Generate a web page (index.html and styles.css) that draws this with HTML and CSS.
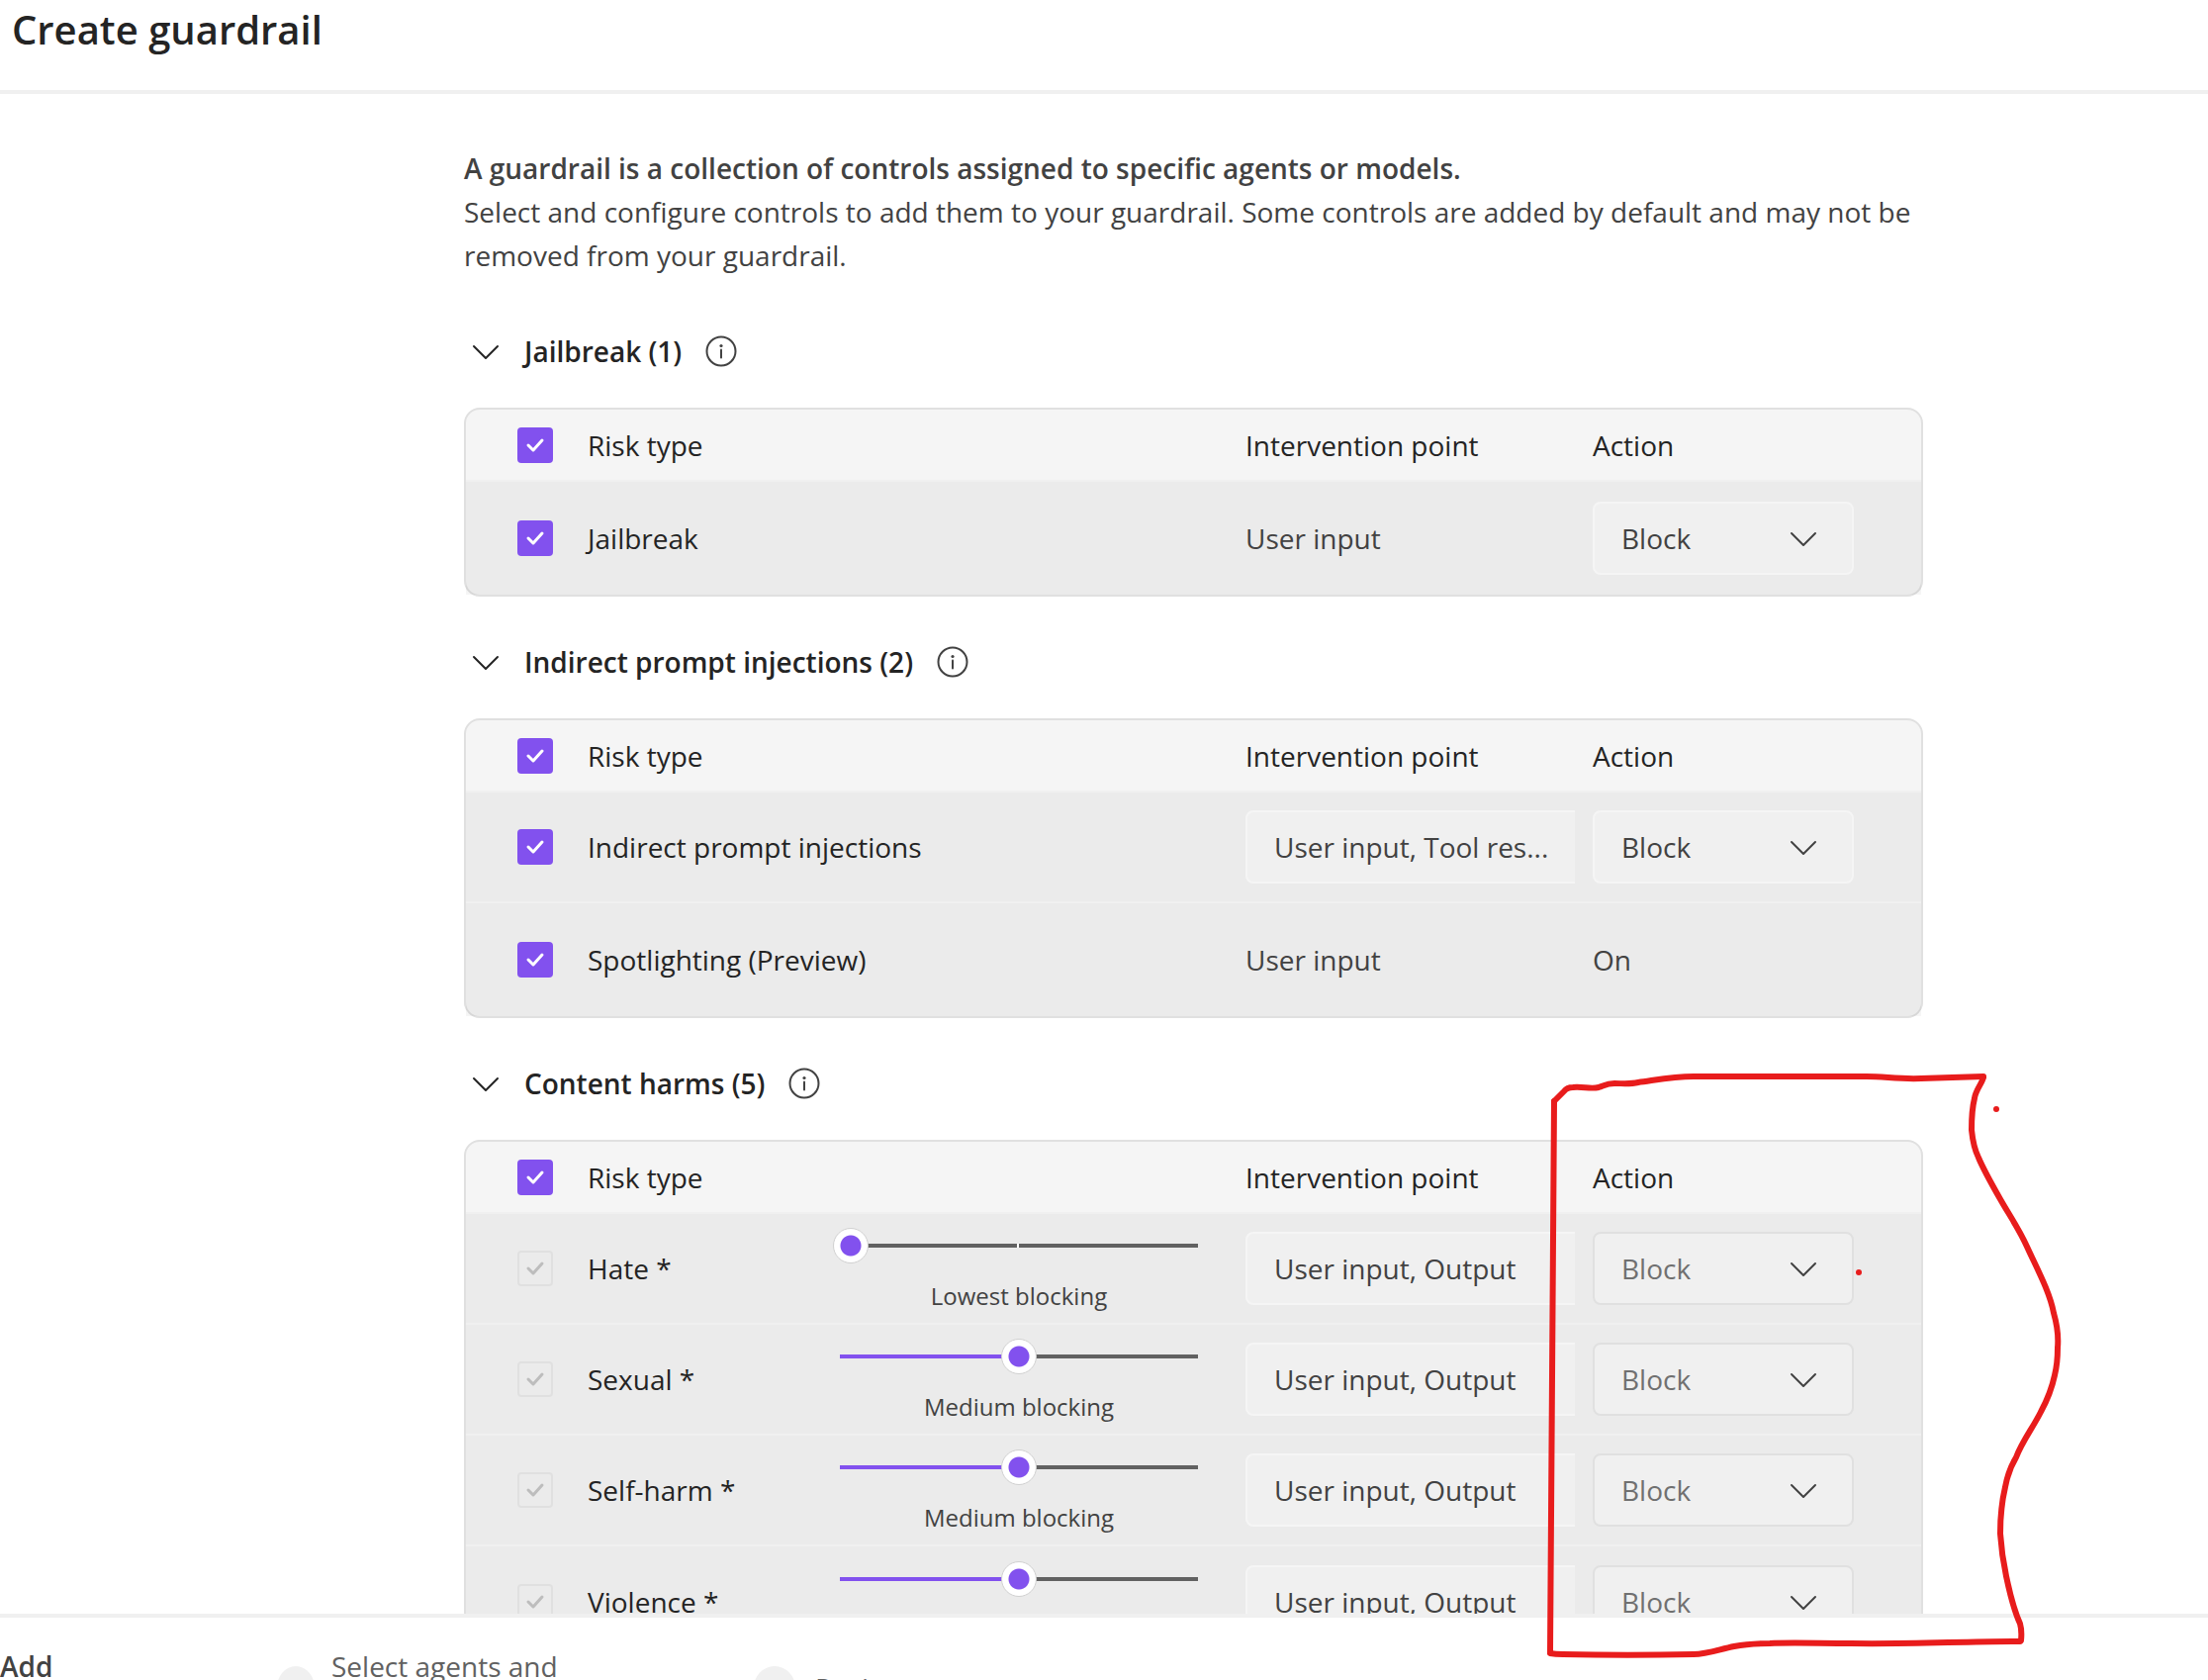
FILE: index.html
```html
<!DOCTYPE html>
<html lang="en">
<head>
<meta charset="utf-8">
<title>Create guardrail</title>
<link rel="stylesheet" href="styles.css">
</head>
<body>
<svg class="defs" aria-hidden="true">
  <symbol id="chevron" viewBox="0 0 28 16"><path d="M2 2l12 12L26 2" fill="none" stroke="currentColor" stroke-width="2" stroke-linecap="round" stroke-linejoin="round"/></symbol>
  <symbol id="check" viewBox="0 0 36 36"><path d="M11 18l5 5 9-10" fill="none" stroke="currentColor" stroke-width="3" stroke-linecap="round" stroke-linejoin="round"/></symbol>
  <symbol id="info" viewBox="0 0 32 32"><circle cx="16" cy="16" r="14.5" fill="none" stroke="currentColor" stroke-width="2"/><circle cx="16" cy="10.5" r="1.6" fill="currentColor"/><path d="M16 14.5v8" stroke="currentColor" stroke-width="2" stroke-linecap="round"/></symbol>
</svg>

<header class="topbar"><h1 class="title">Create guardrail</h1></header>

<main class="content">
  <p class="intro"><strong>A guardrail is a collection of controls assigned to specific agents or models.</strong><br>Select and configure controls to add them to your guardrail. Some controls are added by default and may not be removed from your guardrail.</p>

  <section class="group">
    <div class="group-head">
      <button class="toggle" type="button" aria-expanded="true"><svg class="chevron"><use href="#chevron"/></svg>Jailbreak (1)</button>
      <button class="info" type="button" aria-label="About jailbreak"><svg class="info-icon"><use href="#info"/></svg></button>
    </div>
    <table class="controls">
      <colgroup><col class="col-check"><col><col class="col-level"><col class="col-point"><col class="col-action"></colgroup>
      <thead><tr>
        <th><span class="tick"><input type="checkbox" id="all1" checked><svg><use href="#check"/></svg></span></th>
        <th colspan="2"><label for="all1">Risk type</label></th><th>Intervention point</th><th>Action</th>
      </tr></thead>
      <tbody>
        <tr class="tall">
          <td><span class="tick"><input type="checkbox" id="jb" checked><svg><use href="#check"/></svg></span></td>
          <td colspan="2" class="name"><label for="jb">Jailbreak</label></td>
          <td>User input</td>
          <td><span class="drop"><select aria-label="Jailbreak action"><option>Block</option></select><svg class="chevron"><use href="#chevron"/></svg></span></td>
        </tr>
      </tbody>
    </table>
  </section>

  <section class="group">
    <div class="group-head">
      <button class="toggle" type="button" aria-expanded="true"><svg class="chevron"><use href="#chevron"/></svg>Indirect prompt injections (2)</button>
      <button class="info" type="button" aria-label="About indirect prompt injections"><svg class="info-icon"><use href="#info"/></svg></button>
    </div>
    <table class="controls">
      <colgroup><col class="col-check"><col><col class="col-level"><col class="col-point"><col class="col-action"></colgroup>
      <thead><tr>
        <th><span class="tick"><input type="checkbox" id="all2" checked><svg><use href="#check"/></svg></span></th>
        <th colspan="2"><label for="all2">Risk type</label></th><th>Intervention point</th><th>Action</th>
      </tr></thead>
      <tbody>
        <tr>
          <td><span class="tick"><input type="checkbox" id="ipi" checked><svg><use href="#check"/></svg></span></td>
          <td colspan="2" class="name"><label for="ipi">Indirect prompt injections</label></td>
          <td><div class="clip"><span class="drop wide"><select aria-label="Indirect prompt injections intervention point"><option>User input, Tool res...</option></select><svg class="chevron"><use href="#chevron"/></svg></span></div></td>
          <td><span class="drop"><select aria-label="Indirect prompt injections action"><option>Block</option></select><svg class="chevron"><use href="#chevron"/></svg></span></td>
        </tr>
        <tr class="tall">
          <td><span class="tick"><input type="checkbox" id="spot" checked><svg><use href="#check"/></svg></span></td>
          <td colspan="2" class="name"><label for="spot">Spotlighting (Preview)</label></td>
          <td>User input</td>
          <td>On</td>
        </tr>
      </tbody>
    </table>
  </section>

  <section class="group">
    <div class="group-head">
      <button class="toggle" type="button" aria-expanded="true"><svg class="chevron"><use href="#chevron"/></svg>Content harms (5)</button>
      <button class="info" type="button" aria-label="About content harms"><svg class="info-icon"><use href="#info"/></svg></button>
    </div>
    <table class="controls">
      <colgroup><col class="col-check"><col><col class="col-level"><col class="col-point"><col class="col-action"></colgroup>
      <thead><tr>
        <th><span class="tick"><input type="checkbox" id="all3" checked><svg><use href="#check"/></svg></span></th>
        <th colspan="2"><label for="all3">Risk type</label></th><th>Intervention point</th><th>Action</th>
      </tr></thead>
      <tbody>
        <tr>
          <td><span class="tick"><input type="checkbox" id="hate" checked disabled><svg><use href="#check"/></svg></span></td>
          <td class="name"><label for="hate">Hate *</label></td>
          <td><div class="level"><input class="low" type="range" id="hate-level" min="0" max="2" value="0"><label for="hate-level">Lowest blocking</label></div></td>
          <td><div class="clip"><span class="drop wide"><select aria-label="Hate intervention point"><option>User input, Output</option></select><svg class="chevron"><use href="#chevron"/></svg></span></div></td>
          <td><span class="drop"><select aria-label="Hate action" disabled><option>Block</option></select><svg class="chevron"><use href="#chevron"/></svg></span></td>
        </tr>
        <tr>
          <td><span class="tick"><input type="checkbox" id="sexual" checked disabled><svg><use href="#check"/></svg></span></td>
          <td class="name"><label for="sexual">Sexual *</label></td>
          <td><div class="level"><input type="range" id="sexual-level" min="0" max="2" value="1"><label for="sexual-level">Medium blocking</label></div></td>
          <td><div class="clip"><span class="drop wide"><select aria-label="Sexual intervention point"><option>User input, Output</option></select><svg class="chevron"><use href="#chevron"/></svg></span></div></td>
          <td><span class="drop"><select aria-label="Sexual action" disabled><option>Block</option></select><svg class="chevron"><use href="#chevron"/></svg></span></td>
        </tr>
        <tr>
          <td><span class="tick"><input type="checkbox" id="self" checked disabled><svg><use href="#check"/></svg></span></td>
          <td class="name"><label for="self">Self-harm *</label></td>
          <td><div class="level"><input type="range" id="self-level" min="0" max="2" value="1"><label for="self-level">Medium blocking</label></div></td>
          <td><div class="clip"><span class="drop wide"><select aria-label="Self-harm intervention point"><option>User input, Output</option></select><svg class="chevron"><use href="#chevron"/></svg></span></div></td>
          <td><span class="drop"><select aria-label="Self-harm action" disabled><option>Block</option></select><svg class="chevron"><use href="#chevron"/></svg></span></td>
        </tr>
        <tr>
          <td><span class="tick"><input type="checkbox" id="violence" checked disabled><svg><use href="#check"/></svg></span></td>
          <td class="name"><label for="violence">Violence *</label></td>
          <td><div class="level"><input type="range" id="violence-level" min="0" max="2" value="1" aria-label="Violence blocking level"></div></td>
          <td><div class="clip"><span class="drop wide"><select aria-label="Violence intervention point"><option>User input, Output</option></select><svg class="chevron"><use href="#chevron"/></svg></span></div></td>
          <td><span class="drop"><select aria-label="Violence action" disabled><option>Block</option></select><svg class="chevron"><use href="#chevron"/></svg></span></td>
        </tr>
      </tbody>
    </table>
  </section>
</main>

<footer class="steps">
  <div class="step current"><span class="step-text">Add</span></div>
  <div class="step second"><span class="dot narrow"></span><span class="step-text">Select agents and</span></div>
  <div class="step"><span class="dot"></span><span class="step-text middle">Review</span></div>
</footer>

<svg class="markup" viewBox="1560 1080 530 600" aria-hidden="true">
  <g fill="none" stroke="#e81c1c" stroke-linecap="round" stroke-linejoin="round">
    <path stroke-width="6" d="M1571 1113L1581 1103Q1584 1099 1590 1099C1600 1098 1608 1101 1616 1099C1622 1097 1624 1095 1632 1095C1640 1095 1648 1096 1656 1094C1672 1092 1690 1088 1712 1088H1887C1905 1088 1920 1091 1942 1090L2005 1088"/>
    <path stroke-width="6" d="M2005 1089C2003 1096 1997 1102 1996 1110C1993 1122 1993 1132 1993 1142C1994 1152 1995 1160 2000 1170C2005 1182 2014 1198 2022 1212C2031 1228 2041 1242 2049 1260C2060 1284 2072 1306 2076 1327C2080 1341 2081 1351 2080 1362C2080 1374 2079 1382 2077 1390C2074 1404 2069 1416 2063 1427C2055 1443 2044 1457 2038 1473C2032 1483 2029 1492 2027 1503C2023 1520 2022 1536 2022 1550C2023 1565 2025 1579 2028 1593C2032 1612 2036 1628 2042 1641Q2044 1648 2043 1658"/>
    <path stroke-width="6" d="M2042 1659C1985 1659 1930 1662 1871 1661C1840 1661 1810 1660 1789 1661Q1768 1661 1753 1664C1738 1667 1726 1672 1712 1672C1670 1673 1620 1673 1580 1672Q1572 1672 1567 1671"/>
    <path stroke-width="6" d="M1567 1670L1571 1113"/>
  </g>
  <g fill="#e81c1c"><circle cx="2018" cy="1121" r="3"/><circle cx="1879" cy="1286" r="3"/></g>
</svg>
</body>
</html>
```
FILE: styles.css
```css
* { box-sizing: border-box; }

body {
  position: relative;
  display: flex;
  flex-direction: column;
  height: 100vh;
  margin: 0;
  overflow: hidden;
  background: #fff;
  color: #424242;
  font: 400 28px/44px "Open Sans", "Liberation Sans", sans-serif;
}

.defs { position: absolute; width: 0; height: 0; }

button, select, input { font: inherit; color: inherit; margin: 0; }
button { padding: 0; border: 0; background: none; }

.topbar {
  flex: none;
  padding: 4px 12px 35px;
  border-bottom: 4px solid #f0f0f0;
}
.title { margin: 0; color: #242424; font-size: 40px; font-weight: 600; line-height: 52px; }

.content {
  flex: 1;
  min-height: 0;
  overflow: auto;
  scrollbar-width: none;
  padding: 53px 288px 0 469px;
}
.intro { margin: 0 0 43px; }
.intro strong { font-weight: 600; }

.group { margin-bottom: 34px; }
.group-head {
  display: flex;
  align-items: center;
  gap: 24px;
  height: 64px;
  margin-bottom: 25px;
  padding-left: 8px;
  color: #242424;
}
.toggle { display: flex; align-items: center; gap: 25px; font-weight: 600; }
.chevron { flex: none; width: 28px; height: 16px; margin-top: 2px; }
.info { display: flex; color: #424242; }
.info-icon { width: 32px; height: 32px; }

.controls {
  width: 100%;
  table-layout: fixed;
  border: 2px solid #e0e0e0;
  border-radius: 16px;
  border-spacing: 0;
  background: #f5f5f5;
}
.col-check { width: 123px; }
.col-level { width: 421px; }
.col-point { width: 351px; }
.col-action { width: 332px; }
.controls th, .controls td { padding: 0; text-align: left; font-weight: 400; }
.controls th { height: 73px; border-bottom: 2px solid #f0f0f0; color: #242424; }
.controls td { height: 112px; border-bottom: 2px solid #f0f0f0; background: rgba(0, 0, 0, 0.04); }
.controls tr:last-child td { border-bottom: 0; }
.controls .tall td { height: 114px; }
.controls .name { color: #242424; }

.tick { display: grid; width: 36px; height: 36px; margin-left: 52px; }
.tick > * { grid-area: 1 / 1; width: 36px; height: 36px; }
.tick svg { color: #fff; pointer-events: none; }
.tick input { appearance: none; border-radius: 4px; background: #8251ee; }
.tick input:disabled { border: 2px solid #e0e0e0; background: none; }
.tick input:disabled + svg { color: #bdbdbd; }

.drop { display: grid; align-items: center; width: 264px; }
.drop > * { grid-area: 1 / 1; }
.drop select {
  appearance: none;
  height: 74px;
  padding: 0 60px 0 27px;
  border: 2px solid #f5f5f5;
  border-radius: 8px;
  background: #f0f0f0;
}
.drop select:disabled { border-color: #e0e0e0; color: #707070; opacity: 1; }
.drop .chevron { justify-self: end; margin-right: 37px; pointer-events: none; }
.clip { width: 333px; overflow: hidden; }
.wide { width: 397px; }

.level { display: flex; flex-direction: column; gap: 17px; width: 376px; min-height: 87px; padding-top: 2px; margin-left: 4px; }
.level label { font-size: 24px; line-height: 32px; text-align: center; }
.level input { appearance: none; width: 376px; height: 36px; background: none; }
.level input::-webkit-slider-runnable-track {
  height: 36px;
  background: linear-gradient(90deg, #8251ee 50%, #616161 50%) center / 362px 4px no-repeat;
}
.level .low::-webkit-slider-runnable-track {
  background: linear-gradient(90deg, #616161 179px, #fff 179px, #fff 181px, #616161 181px) center / 362px 4px no-repeat;
}
.level input::-webkit-slider-thumb {
  appearance: none;
  width: 36px;
  height: 36px;
  border: 1px solid #d1d1d1;
  border-radius: 50%;
  background: radial-gradient(circle, #8251ee 10px, #fff 11px);
}

.steps {
  flex: none;
  display: flex;
  height: 67px;
  overflow: hidden;
  padding-top: 27px;
  border-top: 4px solid #f0f0f0;
  color: #616161;
}
.step { display: flex; flex: none; align-items: center; gap: 20px; height: 88px; }
.current { width: 280px; color: #424242; font-weight: 600; }
.second { width: 482px; gap: 17px; }
.dot { width: 42px; height: 44px; border-radius: 50%; background: #f0f0f0; }
.narrow { width: 38px; }
.step-text { align-self: flex-start; }
.middle { align-self: center; }

.markup { position: absolute; left: 1560px; top: 1080px; width: 530px; height: 600px; pointer-events: none; }
```
